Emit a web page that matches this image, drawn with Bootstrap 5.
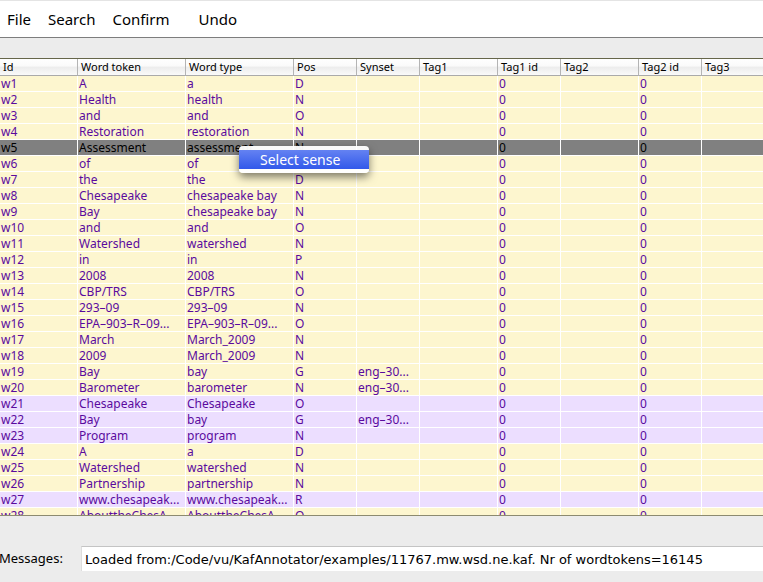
<!DOCTYPE html>
<html lang="en">
<head>
<meta charset="utf-8">
<meta name="viewport" content="width=device-width, initial-scale=1">
<title>KafAnnotator</title>
<link rel="stylesheet" href="https://cdn.jsdelivr.net/npm/bootstrap@5.3.0/dist/css/bootstrap.min.css">
<style>
body { background: #ececec; color: #000; font-family: "Lucida Grande", "Noto Sans", sans-serif; font-size: 12px; line-height: 15px; }
.menubar { height: 38px; border-top: 1px solid #e4e4e4; border-bottom: 1px solid #7d7d7d; gap: 17px; padding: 0 7px; }
.menubar button { font-size: 15px; line-height: 20px; color: #000; }
.undo-item { margin-left: 12px; }
.grid-area { margin-top: 20px; border-top: 1px solid #66664a; border-bottom: 1px solid #8c8a70; background: #fff; min-height: 0; }
.tokens { width: 100%; table-layout: fixed; border-collapse: separate; border-spacing: 0; }
.tokens th { height: 17px; padding: 0 0 0 3px; font-size: 11px; font-weight: 400; line-height: 16px; white-space: nowrap; border-right: 1px solid #b4b4b4; border-bottom: 1px solid #aaa; background: linear-gradient(#fff 0, #fafafa 45%, #ececec 50%, #fafafa 100%); }
.tokens td { height: 16px; padding: 0 0 0 1px; white-space: nowrap; overflow: hidden; color: #5a0a9e; background: #fdf6cf; border-right: 1px solid #fff; border-bottom: 1px solid #fff; }
.tokens th:last-child, .tokens td:last-child { border-right: 0; }
.tokens .named td { background: #ecdeff; }
.tokens .picked td { background: #808080; color: #000; }
.c-id, .c-tag { width: 78px; }
.c-word { width: 108px; }
.c-small { width: 63px; }
.popup { left: 239px; top: 87px; width: 130px; padding: 4px 0; border-radius: 4px; background: rgba(255,255,255,.95); box-shadow: 0 4px 9px rgba(0,0,0,.5); }
.popup button { height: 19px; padding: 0 0 0 21px; font-size: 14px; line-height: 19px; color: #fff; background: linear-gradient(#6482f2, #3259ea); }
.status { padding: 30px 0 11px; }
.status label { width: 82px; font-size: 13px; margin-left: -1px; }
.status input { height: 25px; padding: 0 3px; font-family: "Lucida Grande", "DejaVu Sans", sans-serif; font-size: 13px; line-height: 20px; border: 0; border-top: 1px solid #c4c4c4; border-left: 1px solid #ddd; background: #fff; color: #000; min-width: 0; }
</style>
<script src="https://cdn.jsdelivr.net/npm/bootstrap@5.3.0/dist/js/bootstrap.bundle.min.js"></script>
</head>
<body class="vh-100 d-flex flex-column overflow-hidden">
<nav class="menubar d-flex align-items-center bg-white flex-shrink-0">
  <button type="button" class="border-0 bg-transparent p-0">File</button>
  <button type="button" class="border-0 bg-transparent p-0">Search</button>
  <button type="button" class="border-0 bg-transparent p-0">Confirm</button>
  <button type="button" class="border-0 bg-transparent p-0 undo-item">Undo</button>
</nav>
<main class="grid-area position-relative flex-grow-1">
  <div class="h-100 overflow-hidden">
  <table class="tokens">
    <colgroup><col class="c-id"><col class="c-word"><col class="c-word"><col class="c-small"><col class="c-small"><col class="c-tag"><col class="c-small"><col class="c-tag"><col class="c-small"><col></colgroup>
    <thead><tr><th>Id</th><th>Word token</th><th>Word type</th><th>Pos</th><th>Synset</th><th>Tag1</th><th>Tag1 id</th><th>Tag2</th><th>Tag2 id</th><th>Tag3</th></tr></thead>
    <tbody id="rows"></tbody>
  </table>
  </div>
  <div class="popup position-absolute" role="menu">
    <button type="button" role="menuitem" class="d-block w-100 border-0 text-start">Select sense</button>
  </div>
</main>
<footer class="status d-flex align-items-center flex-shrink-0">
  <label for="message" class="flex-shrink-0">Messages:</label>
  <input id="message" type="text" class="flex-grow-1" readonly value="Loaded from:/Code/vu/KafAnnotator/examples/11767.mw.wsd.ne.kaf. Nr of wordtokens=16145">
</footer>
<script>
// token, type, part of speech, synset, row style
const tokens = [
  ["A", "a", "D"],
  ["Health", "health", "N"],
  ["and", "and", "O"],
  ["Restoration", "restoration", "N"],
  ["Assessment", "assessment", "N", "", "picked"],
  ["of", "of", "O"],
  ["the", "the", "D"],
  ["Chesapeake", "chesapeake bay", "N"],
  ["Bay", "chesapeake bay", "N"],
  ["and", "and", "O"],
  ["Watershed", "watershed", "N"],
  ["in", "in", "P"],
  ["2008", "2008", "N"],
  ["CBP/TRS", "CBP/TRS", "O"],
  ["293–09", "293–09", "N"],
  ["EPA–903–R–09...", "EPA–903–R–09...", "O"],
  ["March", "March_2009", "N"],
  ["2009", "March_2009", "N"],
  ["Bay", "bay", "G", "eng–30..."],
  ["Barometer", "barometer", "N", "eng–30..."],
  ["Chesapeake", "Chesapeake", "O", "", "named"],
  ["Bay", "bay", "G", "eng–30...", "named"],
  ["Program", "program", "N", "", "named"],
  ["A", "a", "D"],
  ["Watershed", "watershed", "N"],
  ["Partnership", "partnership", "N"],
  ["www.chesapeak...", "www.chesapeak...", "R", "", "named"],
  ["AbouttheChesA...", "AbouttheChesA...", "O"]
];
const body = document.getElementById("rows");
tokens.forEach(([token, type, pos, synset = "", style = ""], i) => {
  const row = body.insertRow();
  row.className = style;
  ["w" + (i + 1), token, type, pos, synset, "", "0", "", "0", ""].forEach(text => {
    row.insertCell().textContent = text;
  });
});
</script>
</body>
</html>
